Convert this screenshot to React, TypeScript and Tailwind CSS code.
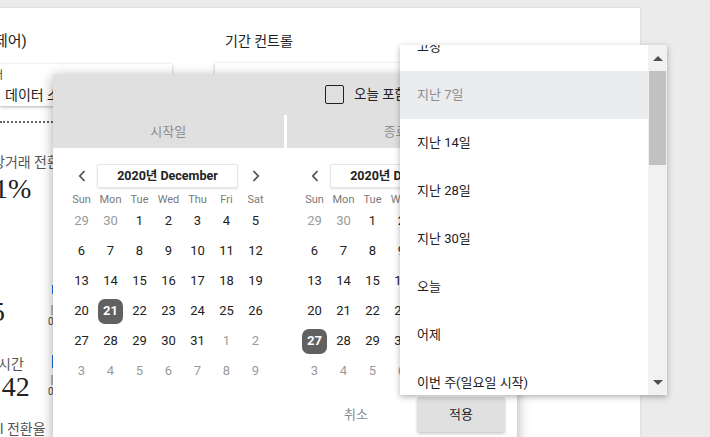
import React from 'react'

const WEEK = ['Sun', 'Mon', 'Tue', 'Wed', 'Thu', 'Fri', 'Sat'];

const PRESETS = ['고정', '지난 7일', '지난 14일', '지난 28일', '지난 30일', '오늘', '어제', '이번 주(일요일 시작)'];

interface DayCell {
  n: number;
  out?: boolean;
}

const buildDecember = (): DayCell[] => {
  const cells: DayCell[] = [{ n: 29, out: true }, { n: 30, out: true }];
  for (let d = 1; d <= 31; d++) cells.push({ n: d });
  for (let d = 1; d <= 9; d++) cells.push({ n: d, out: true });
  return cells;
};

const Chevron = ({ dir }: { dir: 'left' | 'right' }) => (
  <svg width="8" height="12" viewBox="0 0 8 12" fill="none">
    <path
      d={dir === 'left' ? 'M6.5 1 1.8 6l4.7 5' : 'M1.5 1 6.2 6l-4.7 5'}
      stroke="#555"
      strokeWidth="1.8"
    />
  </svg>
);

const Calendar = ({ selected }: { selected: number }) => {
  const days = buildDecember();
  return (
    <div className="w-[203px]">
      {/* month nav */}
      <div className="grid grid-cols-7 h-[24px] items-center">
        <div className="flex justify-center">
          <Chevron dir="left" />
        </div>
        <div className="col-span-5 ml-[1px] mr-[3px] h-[24px] flex items-center justify-center border border-[#e6e6e6] rounded-[2px] shadow-[0_1px_2px_rgba(0,0,0,0.12)] text-[12.5px] font-bold text-[#222]">
          2020년 December
        </div>
        <div className="flex justify-center">
          <Chevron dir="right" />
        </div>
      </div>

      {/* weekday header */}
      <div className="grid grid-cols-7 h-[18px] items-end">
        {WEEK.map((w) => (
          <div key={w} className="text-center text-[11px] leading-[13px] text-[#7a7a7a]">
            {w}
          </div>
        ))}
      </div>

      {/* days */}
      <div className="grid grid-cols-7">
        {days.map((d, i) => (
          <div key={i} className="h-[30px] flex items-center justify-center">
            {!d.out && d.n === selected ? (
              <span className="w-[25px] h-[25px] rounded-[7px] bg-[#616161] text-white font-bold text-[13px] flex items-center justify-center">
                {d.n}
              </span>
            ) : (
              <span className={`text-[13px] ${d.out ? 'text-[#9a9a9a]' : 'text-[#222]'}`}>{d.n}</span>
            )}
          </div>
        ))}
      </div>
    </div>
  );
};

const App = () => {
  return (
    <div className="relative w-[710px] h-[437px] overflow-hidden bg-[#ebebeb] font-[Roboto,'Noto_Sans_CJK_KR',sans-serif]">
      {/* background card */}
      <div className="mt-[8px] w-[640px] h-[429px] bg-white flex shadow-[0_0_2px_rgba(0,0,0,0.12)]">
        {/* LEFT column (data control) */}
        <div className="w-[200px] shrink-0 pt-[23px]">
          <div className="-ml-[6px] text-[15px] leading-[20px] text-[#222]">제어)</div>

          <div className="mt-[13px] h-[42px] w-[172px] bg-white shadow-[0_1px_3px_rgba(0,0,0,0.3)] pt-[5px]">
            <div className="-ml-[7px] h-[14px] text-[11px] leading-[14px] text-[#444]">터</div>
            <div className="mt-[3px] pl-[5px] text-[14px] leading-[18px] text-[#222]">데이터 소스</div>
          </div>

          <div className="mt-[15px] w-[172px] border-b-2 border-dotted border-[#666]" />

          {/* stats */}
          <div className="flex">
            <div className="w-[48px] shrink-0 text-[#444]">
              <div className="mt-[30px] -ml-[8px] whitespace-nowrap text-[14px] leading-[18px] text-[#555]">
                상거래 전환율
              </div>
              <div className="mt-[2px] -ml-[6px] font-['Liberation_Serif',serif] text-[28px] leading-[32px] text-[#222]">
                1%
              </div>
              <div className="mt-[91px] -ml-[9px] font-['Liberation_Serif',serif] text-[28px] leading-[32px] text-[#222]">
                5
              </div>
              <div className="mt-[27px] -ml-[2px] whitespace-nowrap text-[14px] leading-[18px] text-[#555]">
                시간
              </div>
              <div className="-ml-[6px] font-['Liberation_Serif',serif] text-[28px] leading-[28px] text-[#222]">
                :42
              </div>
              <div className="mt-[19px] whitespace-nowrap text-[14px] leading-[18px] text-[#555]">
                l 전환율
              </div>
            </div>
            <div className="w-[8px] shrink-0">
              <div className="mt-[162px] ml-[4px] w-[2px] h-[9px] bg-[#1a73e8]" />
              <div className="mt-[11px] ml-[3px] w-[3px] h-[10px] bg-[#bdbdbd]" />
              <div className="mt-[2px] text-[10px] leading-[10px] text-[#444]">0</div>
              <div className="mt-[28px] ml-[4px] w-[2px] h-[13px] bg-[#1a73e8]" />
              <div className="mt-[7px] ml-[3px] w-[3px] h-[10px] bg-[#bdbdbd]" />
              <div className="mt-[2px] text-[10px] leading-[10px] text-[#444]">0</div>
            </div>
          </div>
        </div>

        {/* RIGHT column (period control) */}
        <div className="ml-[15px] pt-[23px] flex-1">
          <div className="pl-[10px] text-[14px] leading-[20px] text-[#222]">기간 컨트롤</div>
          <div className="mt-[12px] h-[42px] w-[400px] bg-white shadow-[0_1px_3px_rgba(0,0,0,0.3)]" />
        </div>
      </div>

      {/* date range popup */}
      <div className="absolute left-[53px] top-[74px] w-[464px] h-[380px] bg-white shadow-[0_3px_12px_rgba(0,0,0,0.35)]">
        <div className="bg-[#e0e0e0]">
          <div className="h-[41px] flex items-center pl-[272px]">
            <span className="w-[19px] h-[19px] border-[1.5px] border-[#222] rounded-[2px]" />
            <span className="ml-[10px] text-[13.5px] text-[#222]">오늘 포함</span>
          </div>
          <div className="h-[33px] flex">
            <div className="flex-1 flex items-center justify-center text-[13px] text-[#8c8c8c]">시작일</div>
            <div className="w-[3px] bg-white" />
            <div className="flex-1 flex items-center justify-center text-[13px] text-[#8c8c8c]">종료일</div>
          </div>
        </div>

        <div className="flex gap-[30px] px-[14px] pt-[16px]">
          <Calendar selected={21} />
          <Calendar selected={27} />
        </div>

        <div className="flex justify-end items-center h-[35px] mt-[11px] pr-[12px]">
          <button className="w-[64px] mr-[29px] text-[13px] text-[#8a8a8a]">취소</button>
          <button className="w-[88px] h-[35px] bg-[#e0e0e0] rounded-[2px] shadow-[0_2px_3px_rgba(0,0,0,0.2)] text-[13px] text-[#222]">
            적용
          </button>
        </div>
      </div>

      {/* preset dropdown */}
      <div className="absolute left-[400px] top-[45px] w-[267px] h-[350px] bg-white flex shadow-[0_2px_6px_rgba(0,0,0,0.3)]">
        <div className="flex-1 overflow-hidden">
          <div className="-mt-[22px]">
            {PRESETS.map((p, i) => (
              <div
                key={p}
                className={`h-[48px] flex items-center pl-[17px] text-[13px] ${
                  i === 1 ? 'bg-[#ebecee] text-[#8c8c8c]' : 'text-[#202020]'
                }`}
              >
                {p}
              </div>
            ))}
          </div>
        </div>
        <div className="w-[19px] bg-[#f1f1f1] flex flex-col items-center">
          <div className="h-[26px] flex items-center justify-center">
            <span className="w-0 h-0 border-l-[5px] border-r-[5px] border-b-[5px] border-l-transparent border-r-transparent border-b-[#505050]" />
          </div>
          <div className="w-[17px] h-[94px] bg-[#c1c1c1]" />
          <div className="flex-1" />
          <div className="h-[26px] flex items-center justify-center">
            <span className="w-0 h-0 border-l-[5px] border-r-[5px] border-t-[5px] border-l-transparent border-r-transparent border-t-[#505050]" />
          </div>
        </div>
      </div>
    </div>
  );
};

export default App;
